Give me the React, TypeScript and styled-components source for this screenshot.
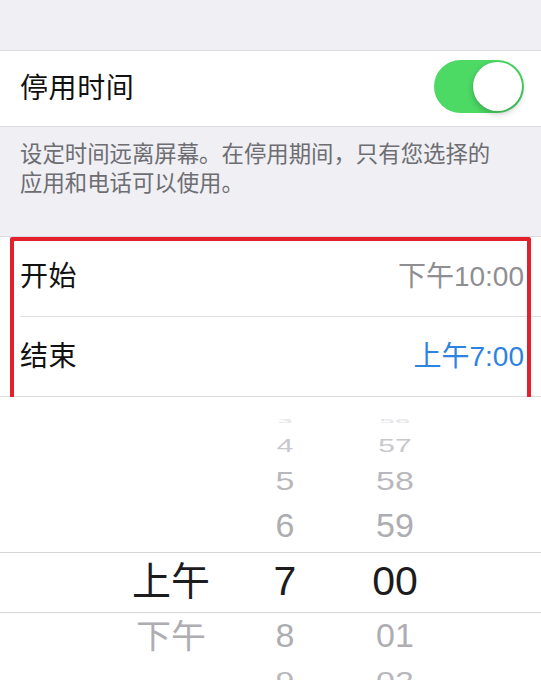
import React from 'react';
import styled, { createGlobalStyle } from 'styled-components';

const GlobalStyle = createGlobalStyle`
  html, body {
    margin: 0;
    padding: 0;
    background: #efeff4;
  }
  body {
    font-family: "Liberation Sans", "Noto Sans CJK SC", sans-serif;
    -webkit-font-smoothing: antialiased;
  }
`;

const Page = styled.div`
  width: 541px;
  height: 680px;
  overflow: hidden;
  display: flex;
  flex-direction: column;
  background: #efeff4;
`;

const TopGap = styled.div`
  height: 50px;
  flex-shrink: 0;
`;

const Group = styled.div`
  position: relative;
  background: #fff;
  border-top: 1px solid #dcdce0;
  border-bottom: 1px solid #dcdce0;
`;

const Row = styled.div<{ $height: number }>`
  height: ${(p) => p.$height}px;
  display: flex;
  align-items: center;
  justify-content: space-between;
  padding: 0 17px 5px 20px;
  box-sizing: border-box;
`;

const Label = styled.span`
  font-size: 28px;
  color: #111;
  letter-spacing: 0.6px;
`;

const Value = styled.span<{ $active?: boolean }>`
  font-size: 28px;
  color: ${(p) => (p.$active ? '#2d83e2' : '#8e8e93')};
`;

const Divider = styled.div`
  height: 1px;
  margin-left: 20px;
  background: #e0e0e4;
`;

const Toggle = styled.div<{ $on: boolean }>`
  width: 90px;
  height: 53px;
  border-radius: 27px;
  background: ${(p) => (p.$on ? '#4cd964' : '#e5e5ea')};
  display: flex;
  align-items: center;
  justify-content: ${(p) => (p.$on ? 'flex-end' : 'flex-start')};
  padding: 2px;
  box-sizing: border-box;

  &::after {
    content: '';
    width: 49px;
    height: 49px;
    border-radius: 50%;
    background: #fff;
    box-shadow: 0 3px 6px rgba(0, 0, 0, 0.22), 0 0 1px rgba(0, 0, 0, 0.2);
  }
`;

const Footnote = styled.p`
  margin: 0;
  padding: 13px 20px 0;
  height: 96px;
  font-size: 22.4px;
  line-height: 29px;
  color: #6d6d72;
`;

const Highlight = styled.div`
  position: absolute;
  left: 10px;
  right: 10px;
  top: 0;
  bottom: -5px;
  border: 4px solid #e3202c;
  border-radius: 2px;
  pointer-events: none;
`;

const Picker = styled.div`
  position: relative;
  flex: 1;
  background: #fff;
  display: grid;
  grid-template-columns: 116px 110px 118px 102px 1fr;
  padding-top: 14px;
  overflow: hidden;
`;

const Band = styled.div`
  position: absolute;
  left: 0;
  right: 0;
  top: 155px;
  height: 59px;
  border-top: 1px solid #d4d4d8;
  border-bottom: 1px solid #d4d4d8;
  pointer-events: none;
`;

const Column = styled.div`
  display: flex;
  flex-direction: column;
  align-items: center;
`;

const Item = styled.div<{ $h: number; $size: number; $scale: number; $color: string }>`
  height: ${(p) => p.$h}px;
  display: flex;
  align-items: center;
  justify-content: center;
  font-size: ${(p) => p.$size}px;
  color: ${(p) => p.$color};
  transform: scaleY(${(p) => p.$scale});
  line-height: 1;
  white-space: nowrap;
`;

// wheel rows from the top edge down to the bottom, selection in the middle
const wheel = [
  { h: 20, size: 28, scale: 0.22, color: '#e2e2e6' },
  { h: 30, size: 30, scale: 0.6, color: '#c8c8cc' },
  { h: 40, size: 34, scale: 0.78, color: '#b8b8bc' },
  { h: 50, size: 34, scale: 0.95, color: '#adadb2' },
  { h: 60, size: 41, scale: 1, color: '#1c1c1e' },
  { h: 50, size: 34, scale: 0.95, color: '#adadb2' },
  { h: 40, size: 34, scale: 0.78, color: '#b8b8bc' },
];

const meridiem = ['', '', '', '', '上午', '下午', ''];
const hours = ['3', '4', '5', '6', '7', '8', '9'];
const minutes = ['56', '57', '58', '59', '00', '01', '02'];

function WheelColumn({ values, cjk }: { values: string[]; cjk?: boolean }) {
  return (
    <Column>
      {values.map((v, i) => {
        const w = wheel[i];
        const size = cjk ? (i === 4 ? 39 : 35) : w.size;
        return (
          <Item key={i} $h={w.h} $size={size} $scale={w.scale} $color={w.color}>
            {v}
          </Item>
        );
      })}
    </Column>
  );
}

export default function App() {
  return (
    <>
      <GlobalStyle />
      <Page>
        <TopGap />
        <Group>
          <Row $height={75}>
            <Label>停用时间</Label>
            <Toggle $on />
          </Row>
        </Group>
        <Footnote>
          设定时间远离屏幕。在停用期间，只有您选择的
          <br />
          应用和电话可以使用。
        </Footnote>
        <Group>
          <Row $height={79}>
            <Label>开始</Label>
            <Value>下午10:00</Value>
          </Row>
          <Divider />
          <Row $height={79}>
            <Label>结束</Label>
            <Value $active>上午7:00</Value>
          </Row>
          <Highlight />
        </Group>
        <Picker>
          <div />
          <WheelColumn values={meridiem} cjk />
          <WheelColumn values={hours} />
          <WheelColumn values={minutes} />
          <div />
          <Band />
        </Picker>
      </Page>
    </>
  );
}
